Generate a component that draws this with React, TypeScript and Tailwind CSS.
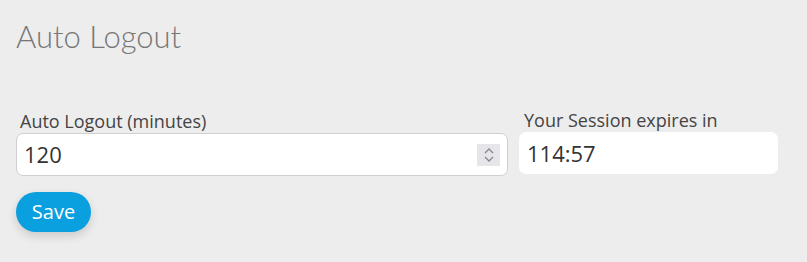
import React from "react";

export default function App() {
  return (
    <div className="w-[807px] h-[262px] bg-[#ededed] pl-[16px] pt-[16px]" style={{ fontFamily: '"Open Sans", sans-serif' }}>
      <h1 className="text-[31px] leading-[40px] font-light text-[#777]" style={{ fontFamily: 'Lato, sans-serif' }}>Auto Logout</h1>
      <div className="flex items-start gap-[11px] mt-[53px]">
        <div className="w-[492px] flex flex-col">
          <label className="pl-[4px] text-[18px] leading-[24px] text-[#444] h-[24px] whitespace-nowrap">Auto Logout (minutes)</label>
          <div className="h-[43px] bg-white border border-[#cfcfcf] rounded-[7px] flex items-center pl-[7px] pr-[7px]">
            <span className="text-[22px] text-[#333] flex-1">120</span>
            <div className="w-[23px] h-[22px] bg-[#e6e6ea] flex flex-col items-center justify-center gap-[2px]">
              <svg width="10" height="6" viewBox="0 0 10 6"><path d="M1 5 L5 1 L9 5" fill="none" stroke="#888" strokeWidth="1.3" /></svg>
              <svg width="10" height="6" viewBox="0 0 10 6"><path d="M1 1 L5 5 L9 1" fill="none" stroke="#888" strokeWidth="1.3" /></svg>
            </div>
          </div>
        </div>
        <div className="w-[259px] flex flex-col -mt-[1px]">
          <label className="pl-[5px] text-[18px] leading-[24px] text-[#444] h-[24px] whitespace-nowrap">Your Session expires in</label>
          <div className="h-[42px] bg-white rounded-[7px] flex items-center pl-[8px]">
            <span className="text-[22px] text-[#333]">114:57</span>
          </div>
        </div>
      </div>
      <button className="mt-[16px] w-[75px] h-[40px] rounded-full bg-[#0a9fdf] text-white text-[20px] leading-[28px] shadow-[0_4px_10px_rgba(0,0,0,0.15)]">Save</button>
    </div>
  );
}
